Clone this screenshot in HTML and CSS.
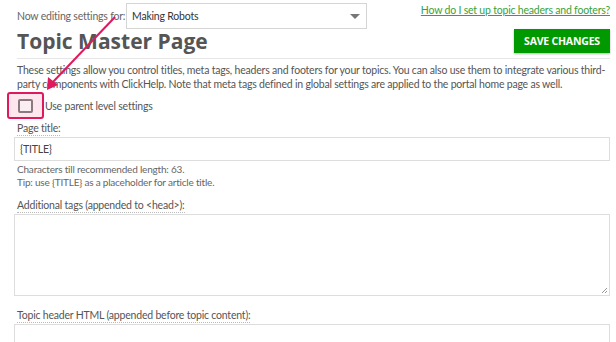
FILE: index.html
```html
<!DOCTYPE html>
<html lang="en">
<head>
    <meta charset="UTF-8">
    <title>Topic Master Page</title>
    <link rel="stylesheet" href="styles.css">
</head>
<body>
<div class="page">
    <div class="top-bar">
        <span class="editing-label">Now editing settings for:</span>
        <div class="select-box">
            <span>Making Robots</span>
            <span class="caret"></span>
        </div>
        <a class="help-link" href="#">How do I set up topic headers and footers?</a>
    </div>
    <div class="header">
        <h1>Topic Master Page</h1>
        <button class="btn-save">SAVE CHANGES</button>
    </div>
    <p class="intro">These settings allow you control titles, meta tags, headers and footers for your topics. You can also use them to integrate various third-party components with ClickHelp. Note that meta tags defined in global settings are applied to the portal home page as well.</p>

    <div class="check-row">
        <span class="highlight"><span class="checkbox"></span></span>
        <span class="check-label">Use parent level settings</span>
    </div>

    <label class="field-label">Page title:</label>
    <div class="text-input">{TITLE}</div>
    <div class="hint">Characters till recommended length: 63.<br>Tip: use {TITLE} as a placeholder for article title.</div>

    <label class="field-label">Additional tags (appended to &lt;head&gt;):</label>
    <div class="text-area">
        <svg class="grip" width="8" height="8" viewBox="0 0 8 8"><path d="M7 2 L2 7 M7 5 L5 7" stroke="#999" stroke-width="1"/></svg>
    </div>

    <label class="field-label label-gap">Topic header HTML (appended before topic content):</label>
    <div class="text-area"></div>

    <svg class="arrow" width="140" height="100" viewBox="0 0 140 100">
        <line x1="115" y1="17" x2="52" y2="83" stroke="#e0195c" stroke-width="2"/>
        <polygon points="47,90 48,77 58,85" fill="#e0195c"/>
    </svg>
</div>
</body>
</html>
```

FILE: styles.css
```css
body {
    margin: 0;
    font-family: Lato, "Liberation Sans", Arial, sans-serif;
    color: #555;
    background-color: #fff;
    overflow: hidden;
}
.page {
    position: relative;
    padding: 3px 6px 0 17px;
    height: 339px;
    overflow: hidden;
    letter-spacing: -0.2px;
}
.top-bar {
    display: flex;
    align-items: center;
    height: 26px;
}
.editing-label {
    font-size: 10.5px;
    color: #666;
    width: 109px;
    white-space: nowrap;
}
.select-box {
    width: 241px;
    height: 26px;
    box-sizing: border-box;
    border: 1px solid #d5d5d5;
    display: flex;
    align-items: center;
    justify-content: space-between;
    padding: 0 6px 0 5px;
    font-size: 10.5px;
    color: #333;
}
.caret {
    width: 0;
    height: 0;
    border-left: 5px solid transparent;
    border-right: 5px solid transparent;
    border-top: 5px solid #777;
}
.help-link {
    margin-left: auto;
    align-self: flex-start;
    margin-top: 1px;
    font-size: 10.5px;
    color: #3aa13a;
    white-space: nowrap;
}
.header {
    display: flex;
    justify-content: space-between;
    align-items: flex-end;
    border-bottom: 1px solid #e6e6e6;
    padding-bottom: 4px;
    margin-top: -1px;
}
h1 {
    margin: 0;
    font-family: "Open Sans", Arial, sans-serif;
    font-size: 21px;
    font-weight: bold;
    color: #555;
    line-height: 26px;
    letter-spacing: 0;
}
.btn-save {
    background-color: #009a00;
    color: #fff;
    border: none;
    font-family: "Open Sans", Arial, sans-serif;
    font-weight: bold;
    font-size: 10.5px;
    letter-spacing: -0.2px;
    width: 96px;
    height: 24px;
    margin-bottom: 1px;
    box-shadow: 0 1px 2px rgba(0, 0, 0, 0.3);
}
.intro {
    margin: 4px 0 0 0;
    font-size: 10.5px;
    line-height: 14px;
    color: #555;
}
.check-row {
    display: flex;
    align-items: center;
    margin: 1px 0 0 -10px;
}
.highlight {
    width: 33px;
    height: 23px;
    border: 2px solid #e0195c;
    border-radius: 3px;
    background-color: #fde6ee;
    display: flex;
    align-items: center;
    justify-content: center;
}
.checkbox {
    width: 11px;
    height: 10px;
    border: 2px solid #8a7a80;
    border-radius: 2px;
    background-color: #fbeef2;
}
.check-label {
    font-size: 10.5px;
    color: #555;
    margin-left: 1px;
}
.field-label {
    display: block;
    width: fit-content;
    font-size: 10.5px;
    color: #555;
    border-bottom: 1px dotted #bbb;
    line-height: 13px;
    margin-top: 3px;
}
.text-input {
    margin: 1px 0 0 -3px;
    height: 24px;
    box-sizing: border-box;
    border: 1px solid #ddd;
    font-size: 10.5px;
    color: #444;
    padding: 5px 5px;
}
.hint {
    font-size: 10px;
    line-height: 13px;
    color: #666;
    margin: 2px 0 10px 0;
}
.text-area {
    position: relative;
    margin: 1px 0 0 -3px;
    height: 82px;
    box-sizing: border-box;
    border: 1px solid #ddd;
}
.label-gap {
    margin-top: 13px;
}
.grip {
    position: absolute;
    right: 1px;
    bottom: 1px;
}
.arrow {
    position: absolute;
    left: 0;
    top: 0;
}
```
